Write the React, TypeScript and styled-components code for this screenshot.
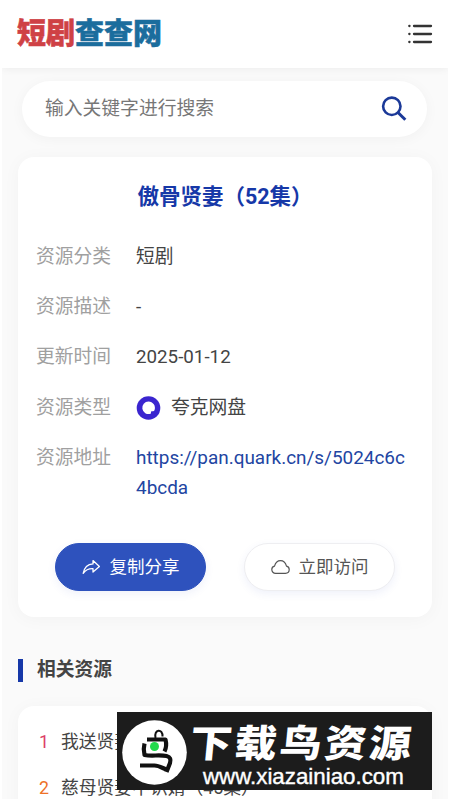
import React from "react";
import styled, { createGlobalStyle } from "styled-components";

const GlobalStyle = createGlobalStyle`
  * {
    box-sizing: border-box;
  }

  body {
    margin: 0;
    height: 800px;
    overflow: hidden;
    background: #fff;
    color: #444;
    font-family: Roboto, "Noto Sans CJK SC", sans-serif;
  }
`;

const Page = styled.div`
  height: 799px;
  margin: 0 2px;
  background: #fafafa;
  overflow: hidden;
`;

const Header = styled.header`
  display: flex;
  align-items: center;
  justify-content: space-between;
  height: 68px;
  padding: 0 15px;
  background: #fff;
  box-shadow: 0 1px 8px rgba(0, 0, 0, 0.06);
`;

const Logo = styled.div`
  display: flex;
  font-size: 29px;
  line-height: 34px;
  font-weight: 900;
  margin-top: -1px;
`;

const LogoPart = styled.span<{ $color: string }>`
  color: ${({ $color }) => $color};
  -webkit-text-stroke: 0.5px ${({ $color }) => $color};
`;

const MenuIcon = styled.svg`
  width: 26px;
  height: 22px;
  margin-top: -1px;
`;

const SearchBar = styled.div`
  display: flex;
  align-items: center;
  justify-content: space-between;
  height: 56px;
  margin: 13px 21px 20px 20px;
  padding: 0 20px 0 23px;
  border-radius: 28px;
  background: #fff;
  box-shadow: 0 2px 14px rgba(0, 0, 0, 0.04);
`;

const Placeholder = styled.span`
  font-size: 18.8px;
  line-height: 28px;
  color: #777;
`;

const SearchIcon = styled.svg`
  width: 26px;
  height: 26px;
`;

const Card = styled.section`
  height: 460px;
  margin: 0 16px;
  padding: 24px 18px 0;
  border-radius: 16px;
  background: #fff;
  box-shadow: 0 2px 18px rgba(0, 0, 0, 0.035);
`;

const Title = styled.h1`
  margin: 0 0 29px;
  font-size: 21.5px;
  line-height: 32px;
  font-weight: 700;
  text-align: center;
  color: #1638a8;
`;

const InfoList = styled.div`
  display: grid;
  gap: 20.2px;
`;

const InfoRow = styled.div`
  display: grid;
  grid-template-columns: 100px 272px;
  font-size: 18.75px;
  line-height: 30px;
`;

const Label = styled.span`
  color: #a0a0a0;
`;

const Value = styled.span`
  display: flex;
  align-items: center;
  gap: 10px;
  color: #444;
`;

const ResourceLink = styled.a`
  font-size: 18.93px;
  color: #2245a2;
  word-break: break-all;
`;

const Actions = styled.div`
  display: flex;
  justify-content: space-between;
  margin: 40px 19px 0;
`;

const ActionButton = styled.button<{ $primary?: boolean }>`
  display: flex;
  align-items: center;
  justify-content: center;
  gap: 9px;
  width: 151px;
  height: 48px;
  padding: 0 0 2px;
  border: 1px solid ${({ $primary }) => ($primary ? "#2e52bd" : "#eeeef1")};
  border-radius: 24px;
  background: ${({ $primary }) => ($primary ? "#2e52bd" : "#fff")};
  color: ${({ $primary }) => ($primary ? "#fff" : "#555")};
  font-family: inherit;
  font-size: 17.5px;
  box-shadow: 0 3px 8px rgba(46, 82, 189, 0.08);

  svg {
    margin-top: 2px;
  }
`;

const SectionTitle = styled.h2`
  display: flex;
  align-items: center;
  gap: 14px;
  margin: 38px 16px 21px;
  font-size: 18.75px;
  line-height: 30px;
  font-weight: 700;
  color: #444;

  &::before {
    content: "";
    width: 5px;
    height: 23px;
    background: #1638a8;
  }
`;

const RelatedList = styled.div`
  height: 150px;
  margin: 0 16px;
  padding: 13px 21px;
  border-radius: 16px;
  background: #fff;
  box-shadow: 0 2px 18px rgba(0, 0, 0, 0.035);
`;

const RelatedItem = styled.div`
  display: flex;
  height: 46px;
  font-size: 17.8px;
  line-height: 46px;
  white-space: nowrap;
`;

const Rank = styled.span<{ $color: string }>`
  width: 22px;
  color: ${({ $color }) => $color};
`;

const Watermark = styled.div`
  position: fixed;
  left: 117px;
  top: 712px;
  display: flex;
  align-items: center;
  width: 315px;
  height: 78px;
  padding: 2px 0 0 5px;
  background: #1c1c1c;
  color: #fff;
`;

const WatermarkText = styled.div`
  width: 227px;
  padding-top: 7px;
  margin-left: 3px;
`;

const WatermarkName = styled.div`
  font-size: 42px;
  line-height: 42px;
  height: 42px;
  font-weight: 900;
  letter-spacing: 2.8px;
  white-space: nowrap;
  transform: scaleY(0.9) skewX(-5deg);
`;

const WatermarkUrl = styled.div`
  height: 24px;
  padding-left: 13px;
  font-family: "Liberation Sans", sans-serif;
  font-size: 22.3px;
  line-height: 24px;
  white-space: nowrap;
  -webkit-text-stroke: 0.4px #fff;
`;

const info = [
  { label: "资源分类", value: "短剧" },
  { label: "资源描述", value: "-" },
  { label: "更新时间", value: "2025-01-12" },
];

const related = [
  { title: "我送贤妻上青云（50集）", color: "#dc4066" },
  { title: "慈母贤妻不识婿（45集）", color: "#ee7227" },
];

const QuarkIcon = () => (
  <svg width="25" height="25" viewBox="0 0 25 25">
    <circle cx="12.5" cy="13" r="11.8" fill="#3a25cf" />
    <path
      d="M12.500 6.500a6.300 6.300 0 1 0 2 12.300c.8-.3.3-1.200.5-1.900.3-.8 1.200-.7 2-.7.7 0 1.200-.3 1.500-1A6.400 6.400 0 0 0 12.500 6.500Z"
      fill="#fff"
    />
  </svg>
);

const ShareIcon = () => (
  <svg width="19" height="16" viewBox="0 0 19 16" fill="none" stroke="#fff" strokeWidth="1.3" strokeLinejoin="round">
    <path d="M11 1.6 17.4 7.4 11 13V9.7C6.5 9.5 3.6 11 1.2 14.4 2.2 8.7 5.3 5.3 11 4.9Z" />
  </svg>
);

const CloudIcon = () => (
  <svg width="19" height="16" viewBox="0 0 19 16" fill="none" stroke="#555" strokeWidth="1.2" strokeLinejoin="round">
    <path d="M4.6 14.3C2.4 14.3.8 12.800.8 10.500c0-1.700 1-3 2.700-3.400C4.500 3.800 6.700 1.700 9.500 1.700c2.800 0 5 2.100 6 5.400 1.700.4 2.700 1.700 2.700 3.400 0 2.300-1.600 3.800-3.800 3.800Z" />
  </svg>
);

const BirdLogo = () => (
  <svg width="65" height="65" viewBox="0 0 65 65">
    <circle cx="32.5" cy="32.5" r="32.3" fill="#fff" />
    <g fill="none" stroke="#111" strokeWidth="4.2" strokeLinejoin="round">
      <path d="M25 19.5h18.500c1 4 1 8-1 12" />
      <path d="M22.500 23.500c-1 4-1 8 0 11.500 8 1.500 14-.5 22 1 4 1 4.500 3.500 3.500 7l-3.500 9" />
      <path d="M18 45.500h14.500c4 0 6 1.500 11.500 4" />
      <path d="M33.500 18c-2-9 7.500-10 7-1.500" strokeWidth="2" />
    </g>
    <circle cx="32.5" cy="26.500" r="4.500" fill="#22d94c" />
  </svg>
);

const App = () => {
  return (
    <>
      <GlobalStyle />
      <Page>
        <Header>
          <Logo>
            <LogoPart $color="#cf4145">短剧</LogoPart>
            <LogoPart $color="#1b6d9d">查查网</LogoPart>
          </Logo>
          <MenuIcon viewBox="0 0 26 22" fill="none" stroke="#333" strokeWidth="2.3" strokeLinecap="round">
            <path d="M2.300 3h.2M2.300 11h.2M2.300 19h.2M7 3h17M7 11h17M7 19h17" />
          </MenuIcon>
        </Header>
        <SearchBar>
          <Placeholder>输入关键字进行搜索</Placeholder>
          <SearchIcon viewBox="0 0 26 26" fill="none" stroke="#1b3998" strokeWidth="2.6">
            <circle cx="10.800" cy="10.300" r="8.700" />
            <path d="m17 16.500 7.300 7.300" strokeWidth="3" />
          </SearchIcon>
        </SearchBar>
        <Card>
          <Title>傲骨贤妻（52集）</Title>
          <InfoList>
            {info.map((item) => (
              <InfoRow key={item.label}>
                <Label>{item.label}</Label>
                <Value>{item.value}</Value>
              </InfoRow>
            ))}
            <InfoRow>
              <Label>资源类型</Label>
              <Value>
                <QuarkIcon />
                夸克网盘
              </Value>
            </InfoRow>
            <InfoRow>
              <Label>资源地址</Label>
              <ResourceLink>https://pan.quark.cn/s/5024c6c4bcda</ResourceLink>
            </InfoRow>
          </InfoList>
          <Actions>
            <ActionButton $primary>
              <ShareIcon />
              复制分享
            </ActionButton>
            <ActionButton>
              <CloudIcon />
              立即访问
            </ActionButton>
          </Actions>
        </Card>
        <SectionTitle>
          <span>相关资源</span>
        </SectionTitle>
        <RelatedList>
          {related.map((item, index) => (
            <RelatedItem key={item.title}>
              <Rank $color={item.color}>{index + 1}</Rank>
              {item.title}
            </RelatedItem>
          ))}
        </RelatedList>
      </Page>
      <Watermark>
        <BirdLogo />
        <WatermarkText>
          <WatermarkName>下载鸟资源</WatermarkName>
          <WatermarkUrl>www.xiazainiao.com</WatermarkUrl>
        </WatermarkText>
      </Watermark>
    </>
  );
};

export default App;
